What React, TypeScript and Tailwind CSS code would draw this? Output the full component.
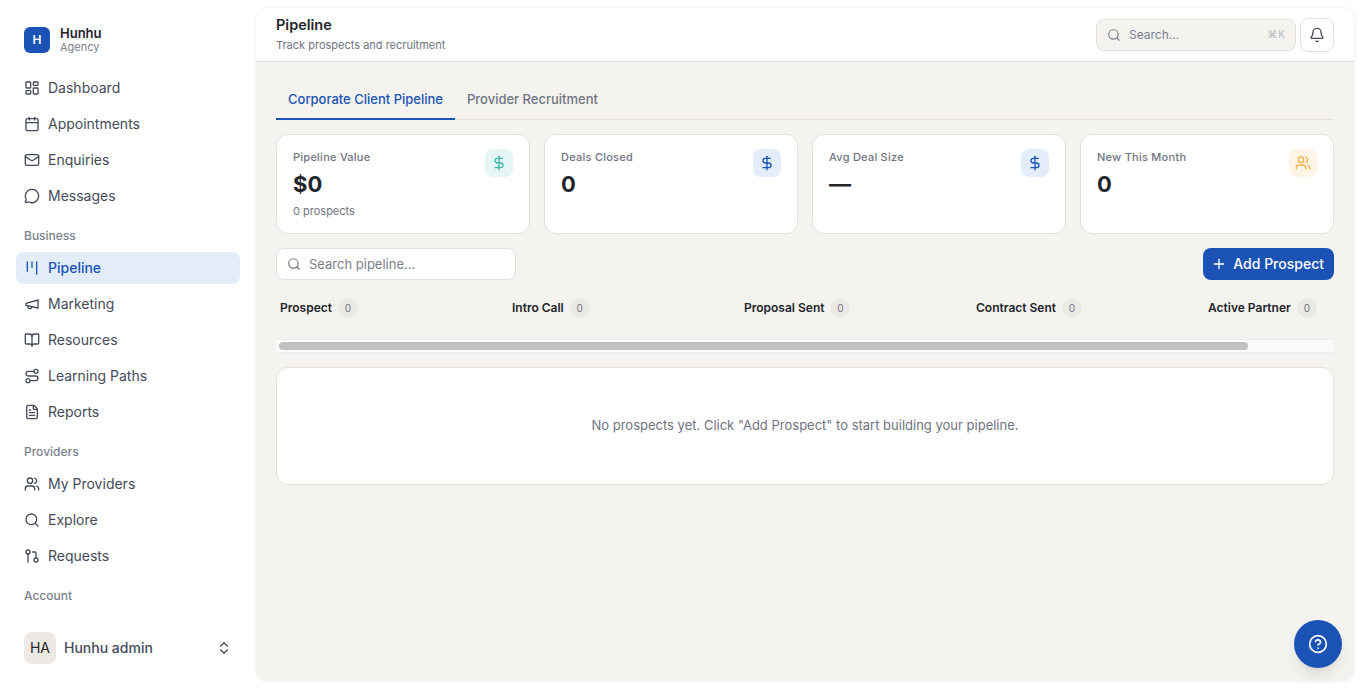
import { Bell, BookOpen, Calendar, ChevronsUpDown, CircleHelp, DollarSign, FileText, GitPullRequest, Kanban, LayoutDashboard, Mail, MessageCircle, Plus, Route, Search, Users } from 'lucide-react'
import type { ComponentType } from 'react'

type Icon = ComponentType<{ className?: string; strokeWidth?: number }>

// older lucide megaphone, the current one has a different outline
function Megaphone({ className }: { className?: string }) {
  return (
    <svg viewBox="0 0 24 24" fill="none" stroke="currentColor" strokeWidth={2} strokeLinecap="round" strokeLinejoin="round" className={className}>
      <path d="m3 11 18-5v12L3 14v-3z" />
      <path d="M11.6 16.8a3 3 0 1 1-5.8-1.6" />
    </svg>
  )
}

function NavItem({ icon: I, label, active }: { icon: Icon; label: string; active?: boolean }) {
  return (
    <a className={`flex h-8 items-center gap-2 rounded-lg px-2 text-sm ${active ? 'bg-[#e3edfa] font-medium text-[#1a53b5]' : 'text-[#454b5a]'}`}>
      <I className="size-4 shrink-0" />
      <span>{label}</span>
    </a>
  )
}

function SectionLabel({ children }: { children: string }) {
  return <div className="flex h-8 items-center px-2 text-xs font-medium text-[#7b808c]">{children}</div>
}

function Sidebar() {
  return (
    <aside className="flex h-full w-[256px] shrink-0 flex-col px-4 pt-[26px]">
      <div className="flex items-center gap-[10px] px-2">
        <div className="flex size-[26px] items-center justify-center rounded-md bg-[#1a53b5] text-xs font-semibold text-white">H</div>
        <div className="leading-none">
          <div className="text-[13px] leading-[14px] font-semibold text-[#23252b]">Hunhu</div>
          <div className="text-[11px] leading-[14px] text-[#7b808c]">Agency</div>
        </div>
      </div>
      <nav className="mt-[18px] flex flex-col gap-1">
        <NavItem icon={LayoutDashboard} label="Dashboard" />
        <NavItem icon={Calendar} label="Appointments" />
        <NavItem icon={Mail} label="Enquiries" />
        <NavItem icon={MessageCircle} label="Messages" />
      </nav>
      <div className="mt-[8px]"><SectionLabel>Business</SectionLabel></div>
      <nav className="flex flex-col gap-1">
        <NavItem icon={Kanban} label="Pipeline" active />
        <NavItem icon={Megaphone} label="Marketing" />
        <NavItem icon={BookOpen} label="Resources" />
        <NavItem icon={Route} label="Learning Paths" />
        <NavItem icon={FileText} label="Reports" />
      </nav>
      <div className="mt-[8px]"><SectionLabel>Providers</SectionLabel></div>
      <nav className="flex flex-col gap-1">
        <NavItem icon={Users} label="My Providers" />
        <NavItem icon={Search} label="Explore" />
        <NavItem icon={GitPullRequest} label="Requests" />
      </nav>
      <div className="mt-[8px]"><SectionLabel>Account</SectionLabel></div>
      <div className="mt-auto mb-6 flex items-center gap-2 px-2">
        <div className="flex size-8 items-center justify-center rounded-lg bg-[#ece9e4] text-sm text-[#23252b]">HA</div>
        <span className="flex-1 text-sm font-medium text-[#454b5a]">Hunhu admin</span>
        <ChevronsUpDown className="size-4 text-[#454b5a]" />
      </div>
    </aside>
  )
}

function StatCard({ label, value, sub, icon: I, tone }: { label: string; value: string; sub?: string; icon: Icon; tone: string }) {
  return (
    <div className="flex h-[100px] justify-between rounded-xl border border-[#e3e0da] bg-white pt-[14px] pr-4 pl-4">
      <div>
        <div className="text-[11px] leading-4 font-medium tracking-[0.25px] text-[#6f7482]">{label}</div>
        <div className="mt-[5px] text-[22px] leading-7 font-bold text-[#23252b]">{value}</div>
        {sub && <div className="mt-[5px] text-[11px] leading-4 text-[#6f7482]">{sub}</div>}
      </div>
      <div className={`flex size-7 items-center justify-center rounded-lg ${tone}`}>
        <I className="size-4" />
      </div>
    </div>
  )
}

function ColumnHead({ label }: { label: string }) {
  return (
    <div className="flex w-[220px] shrink-0 items-center gap-[6px] px-1">
      <span className="text-xs font-semibold whitespace-nowrap text-[#23252b]">{label}</span>
      <span className="flex size-5 items-center justify-center rounded-full bg-[#ebe9e5] text-[10px] text-[#6f7482]">0</span>
    </div>
  )
}

export default function App() {
  return (
    <div className="flex h-[688px] overflow-hidden bg-white font-['Inter',sans-serif]">
      <Sidebar />
      <main className="my-2 mr-2 mb-[7px] flex min-w-0 flex-1 flex-col overflow-hidden rounded-xl bg-[#f4f3f0] shadow-[0_0_4px_rgba(0,0,0,0.08)]">
        <header className="flex h-[54px] shrink-0 items-center justify-between border-b border-[#e3e0da] bg-white px-5">
          <div className="-mt-[2px]">
            <h1 className="text-[14.5px] leading-5 font-semibold text-[#23252b]">Pipeline</h1>
            <p className="mt-[2px] text-[11px] leading-4 text-[#6f7482]">Track prospects and recruitment</p>
          </div>
          <div className="flex items-center gap-1">
            <div className="flex h-8 w-[200px] items-center gap-2 rounded-lg border border-[#e3e0da] bg-[#f4f3f0] px-[10px] text-xs text-[#7b808c]">
              <Search className="size-[14px]" />
              <span className="flex-1">Search...</span>
              <span className="-mr-px text-[10px] tracking-[1px] text-[#b5b8bf]">⌘K</span>
            </div>
            <button className="flex size-[34px] items-center justify-center rounded-lg border border-[#e3e0da] bg-white text-[#454b5a]">
              <Bell className="size-4" />
            </button>
          </div>
        </header>

        <div className="flex flex-1 flex-col px-5 pt-[18px]">
          <div className="flex h-10 border-b border-[#e3e0da] text-[13px] font-medium">
            <div className="-mb-px flex items-center border-b-2 border-[#1a53b5] px-3 pt-px text-[#1a53b5]">Corporate Client Pipeline</div>
            <div className="flex items-center px-3 text-[#6f7482]">Provider Recruitment</div>
          </div>

          <div className="mt-[14px] grid grid-cols-4 gap-[14px]">
            <StatCard label="Pipeline Value" value="$0" sub="0 prospects" icon={DollarSign} tone="bg-[#e4f5f3] text-[#3db8a8]" />
            <StatCard label="Deals Closed" value="0" icon={DollarSign} tone="bg-[#e3edfa] text-[#1a53b5]" />
            <StatCard label="Avg Deal Size" value="—" icon={DollarSign} tone="bg-[#e3edfa] text-[#1a53b5]" />
            <StatCard label="New This Month" value="0" icon={Users} tone="bg-[#fef5e6] text-[#f5b04c]" />
          </div>

          <div className="mt-[14px] flex items-center justify-between">
            <div className="flex h-8 w-[240px] items-center gap-2 rounded-lg border border-[#e3e0da] bg-white px-[10px] text-[13px] text-[#7b808c]">
              <Search className="size-[14px] text-[#6f7482]" />
              <span className="pt-px">Search pipeline...</span>
            </div>
            <button className="flex h-8 items-center gap-[6px] rounded-lg bg-[#1a53b5] pr-[10px] pl-2 text-sm font-medium text-white">
              <Plus className="size-4" />
              Add Prospect
            </button>
          </div>

          <div className="mt-[12px] flex h-[32px] gap-3 overflow-hidden">
            <ColumnHead label="Prospect" />
            <ColumnHead label="Intro Call" />
            <ColumnHead label="Proposal Sent" />
            <ColumnHead label="Contract Sent" />
            <ColumnHead label="Active Partner" />
          </div>

          <div className="mt-[15px] flex h-[14px] items-center border-y border-[#ededed] bg-[#fafafa] px-[3px]">
            <div className="h-2 w-[969px] rounded-full bg-[#c1c1c1]" />
          </div>

          <div className="mt-[14px] flex h-[118px] items-center justify-center rounded-xl border border-[#e3e0da] bg-white text-[13px] text-[#6f7482]">
            No prospects yet. Click "Add Prospect" to start building your pipeline.
          </div>
        </div>
      </main>

      <button className="fixed right-5 bottom-5 flex size-12 items-center justify-center rounded-full bg-[#1a53b5] text-white shadow-lg">
        <CircleHelp className="size-5" />
      </button>
    </div>
  )
}
